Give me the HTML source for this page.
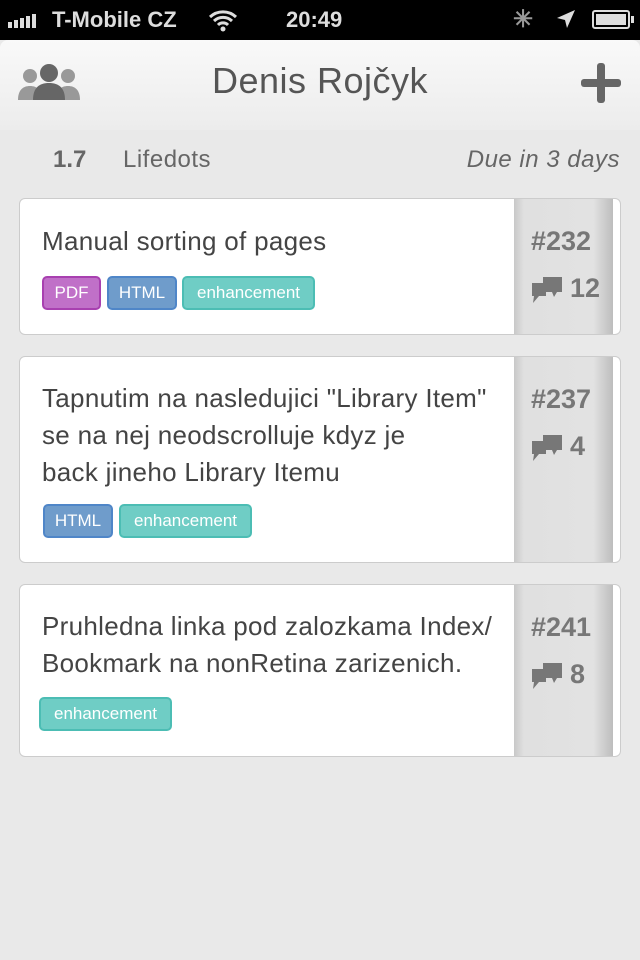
<!DOCTYPE html>
<html><head><meta charset="utf-8"><style>
*{margin:0;padding:0;box-sizing:border-box}
body{width:640px;height:960px;background:#e9e9e9;font-family:"Liberation Sans",sans-serif;position:relative;overflow:hidden}
.sb{position:absolute;left:0;top:0;width:640px;height:40px;background:#000;color:#ddd;font-weight:bold;font-size:22px}
.nav{position:absolute;left:0;top:40px;width:640px;height:90px;background:linear-gradient(#f9f9f9,#ececec);border-radius:8px 8px 0 0}
.title{position:absolute;top:60px;left:0;width:640px;text-align:center;font-size:36px;letter-spacing:0.5px;color:#555}
.sub{position:absolute;top:146px;font-size:24px;color:#666}
.card{position:absolute;left:19px;width:602px;background:#fff;border:1px solid #ccc;border-radius:6px;overflow:hidden}
.side{position:absolute;right:7px;top:0;bottom:0;width:99px;background:linear-gradient(90deg,#c8c8c8,#e0e0e0 10%,#e2e2e2 80%,#bdbdbd)}
.num{position:absolute;left:17px;top:27px;font-size:27px;font-weight:bold;color:#777}
.cm{position:absolute;left:16px;top:74px;font-size:27px;font-weight:bold;color:#777;display:flex;align-items:center;gap:6px}
.t{position:absolute;left:22px;font-size:26px;letter-spacing:0.3px;line-height:37px;color:#444;white-space:nowrap}
.tag{position:absolute;height:34px;border-radius:5px;color:#fff;font-size:17px;line-height:30px;text-align:center;border:2px solid}
.pdf{background:#c070c8;border-color:#a840b0}
.html{background:#6f9ccb;border-color:#4f86c8}
.enh{background:#6fcdc5;border-color:#4cbdb4}
</style></head><body>
<div class="sb"><span style="position:absolute;left:52px;top:7px">T-Mobile CZ</span>
<span style="position:absolute;left:8px;top:14px;display:flex;gap:2px;align-items:flex-end"><i style="width:4px;height:6px;background:#ddd"></i><i style="width:4px;height:8px;background:#ddd"></i><i style="width:4px;height:10px;background:#ddd"></i><i style="width:4px;height:12px;background:#ddd"></i><i style="width:4px;height:14px;background:#ddd"></i></span>
<svg style="position:absolute;left:208px;top:8px" width="30" height="24" viewBox="0 0 30 24"><path d="M2 9a19 19 0 0 1 26 0M6 13a13 13 0 0 1 18 0M10 17a7 7 0 0 1 10 0" stroke="#ddd" stroke-width="3" fill="none"/><circle cx="15" cy="21" r="2.5" fill="#ddd"/></svg>
<span style="position:absolute;left:286px;top:7px">20:49</span>
<span style="position:absolute;left:513px;top:5px;font-size:24px;color:#999">✳</span>
<svg style="position:absolute;left:556px;top:9px" width="20" height="20"><path d="M19 1L1 9l8 2 2 8z" fill="#ddd"/></svg>
<div style="position:absolute;left:592px;top:10px;width:38px;height:19px;border:2px solid #ddd;border-radius:3px;padding:2px"><div style="background:#ddd;height:100%"></div></div>
<div style="position:absolute;left:631px;top:16px;width:3px;height:7px;background:#ddd"></div>
</div>
<div class="nav"></div>
<svg style="position:absolute;left:18px;top:62px" width="62" height="40" viewBox="0 0 62 40"><g fill="#999"><circle cx="12" cy="14" r="7"/><path d="M0 38c0-10 5-14 12-14s12 4 12 14z"/><circle cx="50" cy="14" r="7"/><path d="M38 38c0-10 5-14 12-14s12 4 12 14z"/></g><g fill="#666"><circle cx="31" cy="11" r="9"/><path d="M15 38c0-12 6-17 16-17s16 5 16 17z"/></g></svg>
<div class="title">Denis Rojčyk</div>
<div style="position:absolute;left:581px;top:79px;width:40px;height:8px;background:#666;border-radius:3px"></div>
<div style="position:absolute;left:597px;top:63px;width:8px;height:40px;background:#666;border-radius:3px"></div>
<div class="sub" style="left:53px;font-weight:bold">1.7</div>
<div class="sub" style="left:123px;letter-spacing:0.5px">Lifedots</div>
<div class="sub" style="right:20px;font-style:italic;letter-spacing:0.5px">Due in 3 days</div>

<div class="card" style="top:198px;height:137px">
<div class="t" style="top:24px">Manual sorting of pages</div>
<div class="tag pdf" style="left:22px;top:77px;width:59px">PDF</div>
<div class="tag html" style="left:87px;top:77px;width:70px">HTML</div>
<div class="tag enh" style="left:162px;top:77px;width:133px">enhancement</div>
<div class="side"><div class="num">#232</div><div class="cm"><svg width="34" height="30" viewBox="0 0 34 30"><path d="M13 3h19v15h-5l-3 5-2-5h-9zM2 9h14v13H9l-6 7 1-7H2z" fill="#777"/></svg>12</div></div></div>

<div class="card" style="top:356px;height:207px">
<div class="t" style="top:23px">Tapnutim na nasledujici "Library Item"<br>se na nej neodscrolluje kdyz je<br>back jineho Library Itemu</div>
<div class="tag html" style="left:23px;top:147px;width:70px">HTML</div>
<div class="tag enh" style="left:99px;top:147px;width:133px">enhancement</div>
<div class="side"><div class="num">#237</div><div class="cm"><svg width="34" height="30" viewBox="0 0 34 30"><path d="M13 3h19v15h-5l-3 5-2-5h-9zM2 9h14v13H9l-6 7 1-7H2z" fill="#777"/></svg>4</div></div></div>

<div class="card" style="top:584px;height:173px">
<div class="t" style="top:23px">Pruhledna linka pod zalozkama Index/<br>Bookmark na nonRetina zarizenich.</div>
<div class="tag enh" style="left:19px;top:112px;width:133px">enhancement</div>
<div class="side"><div class="num">#241</div><div class="cm"><svg width="34" height="30" viewBox="0 0 34 30"><path d="M13 3h19v15h-5l-3 5-2-5h-9zM2 9h14v13H9l-6 7 1-7H2z" fill="#777"/></svg>8</div></div></div>
</body></html>
